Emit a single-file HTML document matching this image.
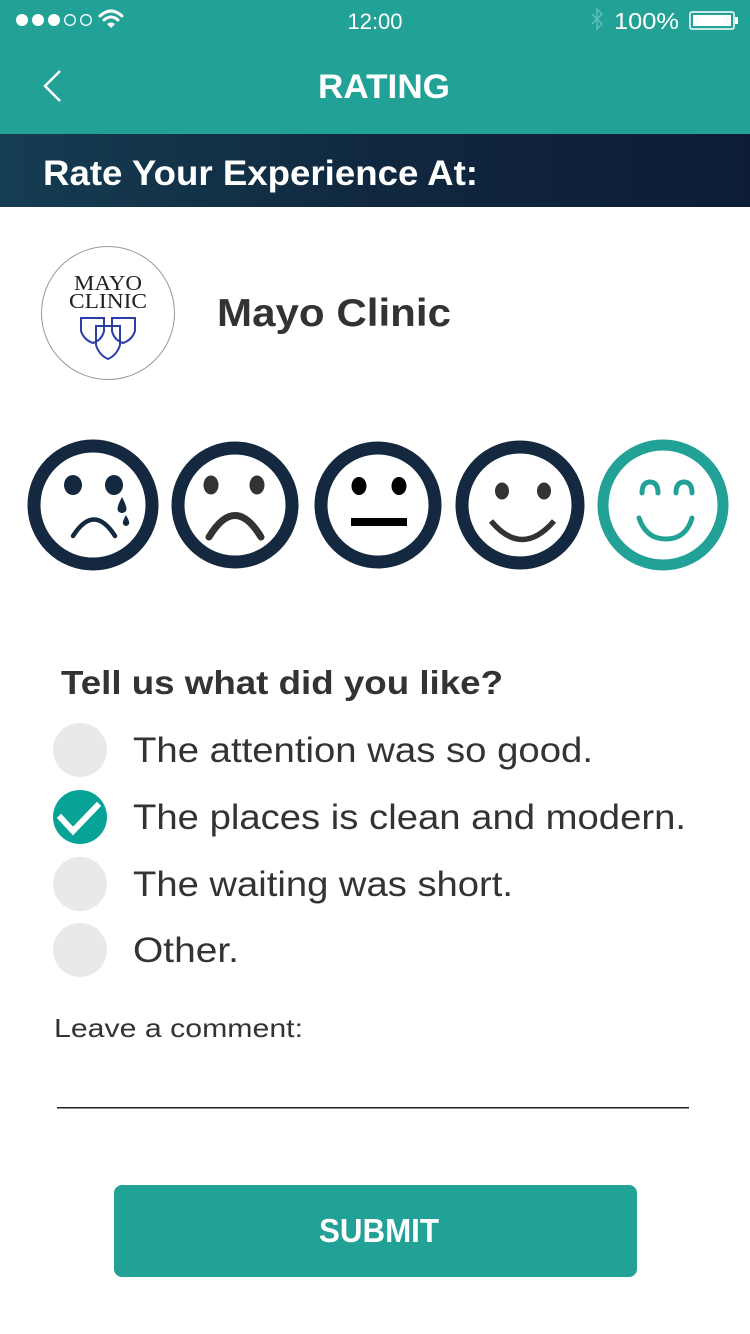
<!DOCTYPE html>
<html><head><meta charset="utf-8"><style>
html,body{margin:0;padding:0;width:750px;height:1334px;overflow:hidden;background:#fff}
svg{display:block}
text{font-family:"Liberation Sans",sans-serif}
text.serif{font-family:"Liberation Serif",serif}
</style></head><body>
<svg width="750" height="1334" viewBox="0 0 750 1334" xmlns="http://www.w3.org/2000/svg">
<defs>
<linearGradient id="g" x1="0" y1="0" x2="1" y2="0">
<stop offset="0" stop-color="#153d52"/><stop offset="0.5" stop-color="#10283f"/><stop offset="1" stop-color="#0d1d36"/>
</linearGradient>
</defs>
<rect x="0" y="0" width="750" height="134" fill="#22a196"/>
<g fill="#fff">
<circle cx="22" cy="20" r="6"/><circle cx="38" cy="20" r="6"/><circle cx="54" cy="20" r="6"/>
<circle cx="70" cy="20" r="5.3" fill="none" stroke="#fff" stroke-width="1.3"/><circle cx="86" cy="20" r="5.3" fill="none" stroke="#fff" stroke-width="1.3"/>
</g>
<g fill="none" stroke="#fff" stroke-width="3" stroke-linecap="round">
<path d="M100 16 Q111 6 122 16"/><path d="M104 20 Q111 14 118 20"/>
</g>
<path d="M107 24 L111 28 L115 24 Q111 21 107 24Z" fill="#fff"/>
<text x="375" y="29" font-size="22" fill="#fff" text-anchor="middle">12:00</text>
<path d="M592 14 L602 24 L597 29 L597 9 L602 14 L592 24" fill="none" stroke="#5cc1b6" stroke-width="1.5"/>
<text x="614" y="29" font-size="23" fill="#fff" textLength="65" lengthAdjust="spacingAndGlyphs">100%</text>
<rect x="690" y="12" width="44" height="17" rx="2" fill="none" stroke="#fff" stroke-width="1.5"/>
<rect x="693" y="15" width="38" height="11" fill="#fff"/>
<rect x="735" y="17" width="3" height="7" fill="#fff"/>
<path d="M60 71 L45 86 L60 101" fill="none" stroke="#fff" stroke-width="2.5"/>
<text x="318" y="98" font-size="34" fill="#fff" font-weight="bold" textLength="132" lengthAdjust="spacingAndGlyphs">RATING</text>
<rect x="0" y="134" width="750" height="73" fill="url(#g)"/>
<text x="43" y="185" font-size="35" fill="#fff" font-weight="bold" textLength="435" lengthAdjust="spacingAndGlyphs">Rate Your Experience At:</text>
<circle cx="108" cy="313" r="66.5" fill="#fff" stroke="#999" stroke-width="1"/>
<text class="serif" x="108" y="290" font-size="21" fill="#222" text-anchor="middle" textLength="68" lengthAdjust="spacingAndGlyphs">MAYO</text>
<text class="serif" x="108" y="308" font-size="21" fill="#222" text-anchor="middle" textLength="78" lengthAdjust="spacingAndGlyphs">CLINIC</text>
<g fill="none" stroke="#2a3fa6" stroke-width="2">
<path d="M81 318 L81 331 Q84 340 93 343 Q102 340 104 331 L104 318Z"/>
<path d="M112 318 L112 331 Q114 340 123 343 Q132 340 135 331 L135 318Z"/>
<path d="M96 326 L96 345 Q99 355 108 359 Q117 355 120 345 L120 326Z"/>
<path d="M96 326 L120 326"/>
</g>
<text x="217" y="326" font-size="39" fill="#333" font-weight="bold" textLength="234" lengthAdjust="spacingAndGlyphs">Mayo Clinic</text>
<g fill="none" stroke="#14293f" stroke-width="13">
<circle cx="93" cy="505" r="59"/><circle cx="235" cy="505" r="57"/><circle cx="378" cy="505" r="57"/><circle cx="520" cy="505" r="58"/>
</g>
<circle cx="663" cy="505" r="60" fill="none" stroke="#22a196" stroke-width="11"/>
<ellipse cx="73" cy="485" rx="9" ry="10" fill="#14293f"/><ellipse cx="114" cy="485" rx="9" ry="10" fill="#14293f"/>
<path d="M73 536 Q94 503 115 536" fill="none" stroke="#14293f" stroke-width="4.5" stroke-linecap="round"/>
<path d="M122 497 Q116 508 118 511 Q122 515 126 511 Q128 508 122 497Z" fill="#14293f"/>
<path d="M126 515 Q122 522 123 524 Q126 528 129 524 Q130 522 126 515Z" fill="#14293f"/>
<ellipse cx="211" cy="485" rx="7.5" ry="9.5" fill="#333"/><ellipse cx="257" cy="485" rx="7.5" ry="9.5" fill="#333"/>
<path d="M209 537 Q235 494 261 537" fill="none" stroke="#333" stroke-width="7" stroke-linecap="round"/>
<ellipse cx="359" cy="486" rx="7.5" ry="9" fill="#000"/><ellipse cx="399" cy="486" rx="7.5" ry="9" fill="#000"/>
<rect x="351" y="518" width="56" height="8" fill="#000"/>
<ellipse cx="502" cy="491" rx="7" ry="8.5" fill="#333"/><ellipse cx="544" cy="491" rx="7" ry="8.5" fill="#333"/>
<path d="M491 521 Q522 558 554 521" fill="none" stroke="#333" stroke-width="5.5"/>
<g fill="none" stroke="#22a196" stroke-width="5" stroke-linecap="round">
<path d="M642 493 Q642 482 650 482 Q658 482 658 493"/>
<path d="M676 493 Q676 482 684 482 Q692 482 692 493"/>
<path d="M639 518 Q646 539 666 539 Q686 539 692 518"/>
</g>
<text x="61" y="694" font-size="33" fill="#333" font-weight="bold" textLength="442" lengthAdjust="spacingAndGlyphs">Tell us what did you like?</text>
<circle cx="80" cy="750" r="27" fill="#e9e9e9"/>
<circle cx="80" cy="817" r="27" fill="#07a396"/>
<path d="M61 818 L73 831 L97 806" fill="none" stroke="#fff" stroke-width="6" stroke-linecap="square"/>
<circle cx="80" cy="884" r="27" fill="#e9e9e9"/>
<circle cx="80" cy="950" r="27" fill="#e9e9e9"/>
<g font-size="35" fill="#333">
<text x="133" y="762" textLength="460" lengthAdjust="spacingAndGlyphs">The attention was so good.</text>
<text x="133" y="829" textLength="553" lengthAdjust="spacingAndGlyphs">The places is clean and modern.</text>
<text x="133" y="896" textLength="380" lengthAdjust="spacingAndGlyphs">The waiting was short.</text>
<text x="133" y="962" textLength="106" lengthAdjust="spacingAndGlyphs">Other.</text>
</g>
<text x="54" y="1037" font-size="26" fill="#333" textLength="249" lengthAdjust="spacingAndGlyphs">Leave a comment:</text>
<rect x="57" y="1107" width="632" height="1.5" fill="#222"/>
<rect x="114" y="1185" width="523" height="92" rx="8" fill="#22a196"/>
<text x="319" y="1242" font-size="33" fill="#fff" font-weight="bold" textLength="120" lengthAdjust="spacingAndGlyphs">SUBMIT</text>
</svg>
</body></html>
